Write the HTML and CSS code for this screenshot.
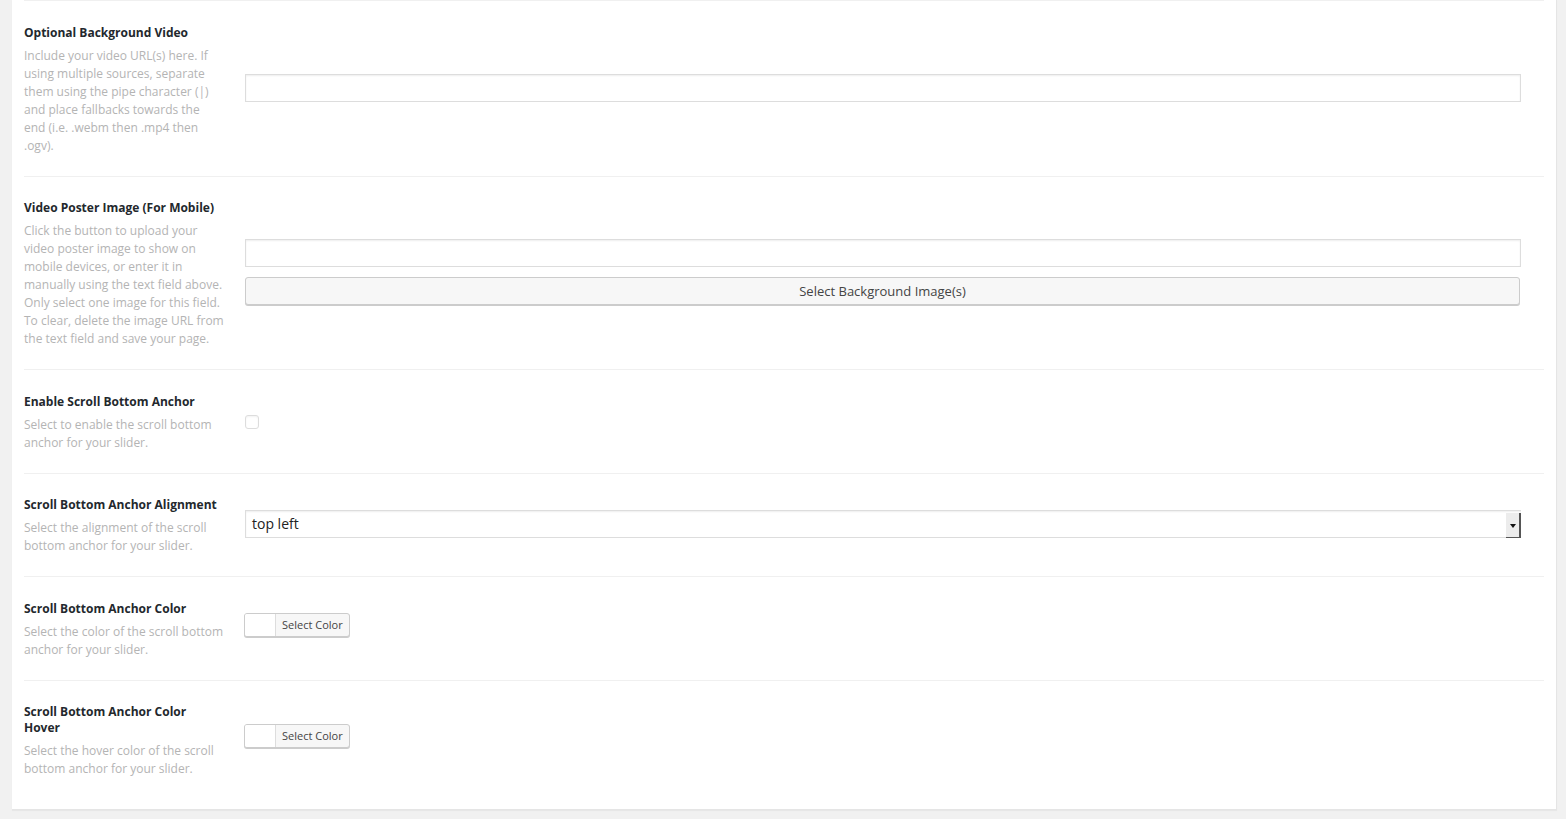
FILE: index.html
```html
<!DOCTYPE html>
<html>
<head>
<meta charset="utf-8">
<link rel="stylesheet" href="styles.css">
</head>
<body>
<div class="panel">
  <div class="row">
    <div class="label">
      <div class="title">Optional Background Video</div>
      <div class="desc">Include your video URL(s) here. If using multiple sources, separate them using the pipe character (|) and place fallbacks towards the end (i.e. .webm then .mp4 then .ogv).</div>
    </div>
    <div class="control">
      <div class="text-input"></div>
    </div>
  </div>

  <div class="row">
    <div class="label">
      <div class="title">Video Poster Image (For Mobile)</div>
      <div class="desc">Click the button to upload your video poster image to show on mobile devices, or enter it in manually using the text field above. Only select one image for this field. To clear, delete the image URL from the text field and save your page.</div>
    </div>
    <div class="control stack">
      <div class="text-input"></div>
      <div class="wide-btn">Select Background Image(s)</div>
    </div>
  </div>

  <div class="row">
    <div class="label">
      <div class="title">Enable Scroll Bottom Anchor</div>
      <div class="desc">Select to enable the scroll bottom anchor for your slider.</div>
    </div>
    <div class="control">
      <div class="checkbox"></div>
    </div>
  </div>

  <div class="row">
    <div class="label">
      <div class="title">Scroll Bottom Anchor Alignment</div>
      <div class="desc">Select the alignment of the scroll bottom anchor for your slider.</div>
    </div>
    <div class="control">
      <div class="select">
        <span class="select-value">top left</span>
        <span class="select-arrow"><span class="tri"></span></span>
      </div>
    </div>
  </div>

  <div class="row">
    <div class="label">
      <div class="title">Scroll Bottom Anchor Color</div>
      <div class="desc">Select the color of the scroll bottom anchor for your slider.</div>
    </div>
    <div class="control">
      <div class="color-btn"><span class="swatch"></span><span class="color-label">Select Color</span></div>
    </div>
  </div>

  <div class="row last">
    <div class="label">
      <div class="title">Scroll Bottom Anchor Color Hover</div>
      <div class="desc">Select the hover color of the scroll bottom anchor for your slider.</div>
    </div>
    <div class="control">
      <div class="color-btn"><span class="swatch"></span><span class="color-label">Select Color</span></div>
    </div>
  </div>
</div>
</body>
</html>
```

FILE: styles.css
```css
html, body {
  margin: 0;
  padding: 0;
  background: #f1f1f1;
  font-family: "Open Sans", "Noto Sans", sans-serif;
  height: 819px;
  overflow: hidden;
}

.panel {
  margin: 0 10px 0 12px;
  background: #fff;
  border-right: 1px solid #e5e5e5;
  border-bottom: 1px solid #e5e5e5;
  box-sizing: border-box;
  width: 1545px;
  padding: 0 12px 10px 12px;
  box-shadow: 0 1px 1px rgba(0,0,0,0.04);
}

.row {
  display: flex;
  align-items: center;
  border-top: 1px solid #f0f0f0;
  padding: 23.5px 0 21px 0;
}

.label {
  width: 200px;
  flex: 0 0 200px;
  align-self: flex-start;
}

.title {
  font-size: 12px;
  font-weight: 700;
  line-height: 16px;
  color: #23282d;
}

.desc {
  margin-top: 6px;
  font-size: 12px;
  line-height: 18px;
  color: #b4b4b4;
}

.control {
  flex: 1;
  margin-left: 21px;
  padding-right: 23px;
  margin-bottom: 4px;
}

.stack {
  display: flex;
  flex-direction: column;
  gap: 10px;
}

.text-input {
  height: 28px;
  box-sizing: border-box;
  border: 1px solid #ddd;
  box-shadow: inset 0 1px 2px rgba(0,0,0,0.07);
  background: #fff;
}

.wide-btn {
  height: 28px;
  box-sizing: border-box;
  margin-right: 1px;
  border: 1px solid #ccc;
  border-radius: 3px;
  background: #f7f7f7;
  box-shadow: 0 1px 0 #ccc;
  color: #444;
  font-size: 13px;
  line-height: 26px;
  text-align: center;
}

.checkbox {
  width: 14px;
  height: 14px;
  box-sizing: border-box;
  border: 1px solid #ddd;
  border-radius: 3px;
  background: #fff;
  box-shadow: inset 0 1px 2px rgba(0,0,0,0.05);
  margin-top: 3px;
}

.select {
  display: flex;
  align-items: stretch;
  height: 28px;
  box-sizing: border-box;
  border: 1px solid #ddd;
  border-right: none;
  box-shadow: inset 0 1px 2px rgba(0,0,0,0.07);
  background: #fff;
}

.select-value {
  flex: 1;
  padding-left: 6px;
  font-size: 14px;
  line-height: 25px;
  color: #222;
}

.select-arrow {
  width: 13px;
  background: #ececec;
  border-right: 2px solid #555;
  border-bottom: 1px solid #555;
  margin-top: 2px;
  margin-bottom: -1px;
  display: flex;
  align-items: center;
  justify-content: center;
}

.tri {
  width: 0;
  height: 0;
  border-left: 3px solid transparent;
  border-right: 3px solid transparent;
  border-top: 4px solid #111;
  margin-top: 1px;
}

.color-btn {
  display: inline-flex;
  height: 24px;
  box-sizing: border-box;
  margin-left: -1px;
  border: 1px solid #ccc;
  border-radius: 3px;
  background: #f7f7f7;
  box-shadow: 0 1px 0 #ccc;
  margin-bottom: 6px;
  overflow: hidden;
}

.swatch {
  width: 30px;
  background: #fff;
  border-right: 1px solid #ddd;
}

.color-label {
  padding: 0 6px 0 6px;
  font-size: 11px;
  line-height: 22px;
  color: #444;
}
```
